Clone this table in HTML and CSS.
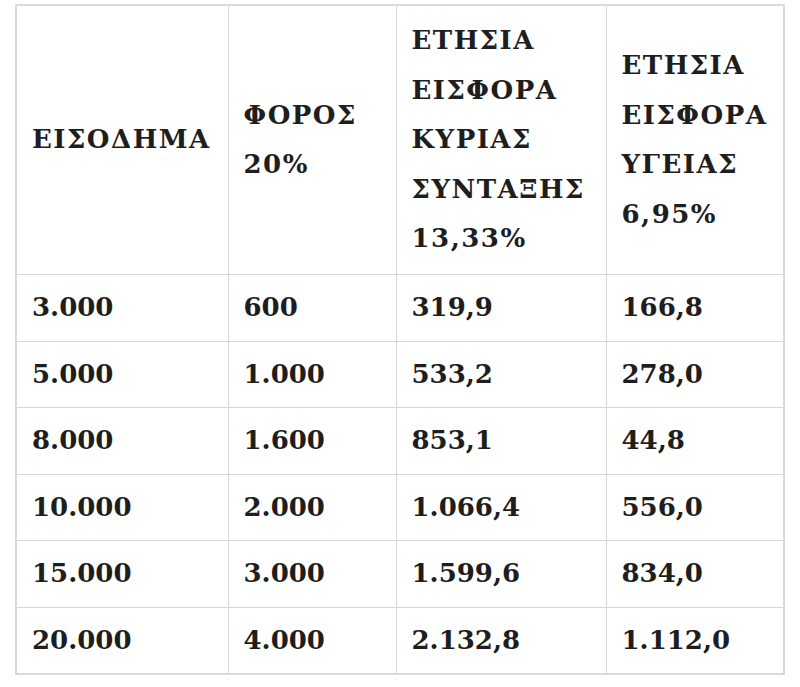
FILE: index.html
```html
<!DOCTYPE html>
<html lang="el">
<head>
    <meta charset="UTF-8">
    <meta name="viewport" content="width=device-width, initial-scale=1.0">
    <title>Εισφορές</title>
    <link rel="stylesheet" href="styles.css">
</head>
<body>
    <table class="contrib-table">
        <colgroup>
            <col class="col-income">
            <col class="col-tax">
            <col class="col-pension">
            <col class="col-health">
        </colgroup>
        <thead>
            <tr>
                <th>ΕΙΣΟΔΗΜΑ</th>
                <th>ΦΟΡΟΣ 20%</th>
                <th>ΕΤΗΣΙΑ ΕΙΣΦΟΡΑ ΚΥΡΙΑΣ ΣΥΝΤΑΞΗΣ 13,33%</th>
                <th>ΕΤΗΣΙΑ ΕΙΣΦΟΡΑ ΥΓΕΙΑΣ 6,95%</th>
            </tr>
        </thead>
        <tbody>
            <tr><td>3.000</td><td>600</td><td>319,9</td><td>166,8</td></tr>
            <tr><td>5.000</td><td>1.000</td><td>533,2</td><td>278,0</td></tr>
            <tr><td>8.000</td><td>1.600</td><td>853,1</td><td>44,8</td></tr>
            <tr><td>10.000</td><td>2.000</td><td>1.066,4</td><td>556,0</td></tr>
            <tr><td>15.000</td><td>3.000</td><td>1.599,6</td><td>834,0</td></tr>
            <tr><td>20.000</td><td>4.000</td><td>2.132,8</td><td>1.112,0</td></tr>
        </tbody>
    </table>
</body>
</html>
```

FILE: styles.css
```css
body {
    margin: 0;
    padding: 4px 0 0 15px;
    background-color: #fff;
    font-family: "DejaVu Serif", Georgia, serif;
    color: #1e1e1e;
}
.contrib-table {
    border-collapse: collapse;
    table-layout: fixed;
    width: 768px;
    border: 2px solid #dadada;
}
.col-income {
    width: 212px;
}
.col-tax {
    width: 168px;
}
.col-pension {
    width: 210px;
}
.col-health {
    width: 178px;
}
.contrib-table th,
.contrib-table td {
    border: 1px solid #d6d6d6;
    text-align: left;
    vertical-align: middle;
    font-weight: bold;
    font-size: 26px;
    line-height: 49.5px;
    padding: 8px 8px 8px 15px;
}
.contrib-table th {
    padding-top: 10px;
    padding-bottom: 10px;
    height: 248px;
    letter-spacing: 1.5px;
}
.contrib-table td {
    height: 49.5px;
}
```
